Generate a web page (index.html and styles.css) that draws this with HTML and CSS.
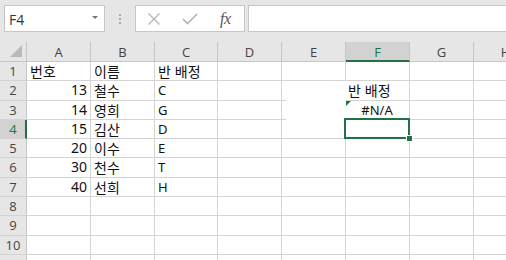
FILE: index.html
```html
<!DOCTYPE html>
<html lang="ko">
<head>
<meta charset="utf-8">
<link rel="stylesheet" href="styles.css">
</head>
<body>
<div class="app">
  <div class="toolbar">
    <div class="namebox"><span class="nb-text">F4</span><span class="nb-arrow"></span></div>
    <div class="grip"><i></i><i></i><i></i></div>
    <div class="fbtns">
      <svg class="ico" width="14" height="14" viewBox="0 0 14 14"><path d="M1.5 1.5 L12.5 12.5 M12.5 1.5 L1.5 12.5" stroke="#b4b4b4" stroke-width="1.3" fill="none"/></svg>
      <svg class="ico" width="16" height="12" viewBox="0 0 16 12"><path d="M1 6 L5.5 10.5 L15 1" stroke="#b4b4b4" stroke-width="1.6" fill="none"/></svg>
      <span class="fx">fx</span>
    </div>
    <div class="finput"></div>
  </div>
  <div class="sheet">
    <div class="corner"><svg width="13" height="13" viewBox="0 0 13 13"><polygon points="12,0 12,12 0,12" fill="#b9b9b9"/></svg></div>
    <div class="ch">A</div><div class="ch">B</div><div class="ch">C</div><div class="ch">D</div><div class="ch">E</div><div class="ch ch-sel">F</div><div class="ch">G</div><div class="ch">H</div>

    <div class="rh">1</div><div class="c">번호</div><div class="c">이름</div><div class="c">반 배정</div><div class="c"></div><div class="c"></div><div class="c"></div><div class="c"></div><div class="c"></div>
    <div class="rh">2</div><div class="c num">13</div><div class="c">철수</div><div class="c lat">C</div><div class="c"></div><div class="c e-blank stub"></div><div class="c e-left">반 배정</div><div class="c"></div><div class="c"></div>
    <div class="rh">3</div><div class="c num">14</div><div class="c">영희</div><div class="c lat">G</div><div class="c"></div><div class="c e-blank stub"></div><div class="c e-left err">#N/A</div><div class="c"></div><div class="c"></div>
    <div class="rh rh-sel">4</div><div class="c num">15</div><div class="c">김산</div><div class="c lat">D</div><div class="c"></div><div class="c e-last"></div><div class="c sel"></div><div class="c"></div><div class="c"></div>
    <div class="rh">5</div><div class="c num">20</div><div class="c">이수</div><div class="c lat">E</div><div class="c"></div><div class="c"></div><div class="c"></div><div class="c"></div><div class="c"></div>
    <div class="rh">6</div><div class="c num">30</div><div class="c">천수</div><div class="c lat">T</div><div class="c"></div><div class="c"></div><div class="c"></div><div class="c"></div><div class="c"></div>
    <div class="rh">7</div><div class="c num">40</div><div class="c">선희</div><div class="c lat">H</div><div class="c"></div><div class="c"></div><div class="c"></div><div class="c"></div><div class="c"></div>
    <div class="rh">8</div><div class="c"></div><div class="c"></div><div class="c"></div><div class="c"></div><div class="c"></div><div class="c"></div><div class="c"></div><div class="c"></div>
    <div class="rh">9</div><div class="c"></div><div class="c"></div><div class="c"></div><div class="c"></div><div class="c"></div><div class="c"></div><div class="c"></div><div class="c"></div>
    <div class="rh">10</div><div class="c"></div><div class="c"></div><div class="c"></div><div class="c"></div><div class="c"></div><div class="c"></div><div class="c"></div><div class="c"></div>
    <div class="rh">11</div><div class="c"></div><div class="c"></div><div class="c"></div><div class="c"></div><div class="c"></div><div class="c"></div><div class="c"></div><div class="c"></div>
  </div>
</div>
</body>
</html>
```
FILE: styles.css
```css
html, body {
  margin: 0;
  padding: 0;
  background: #fff;
  overflow: hidden;
}
.app {
  width: 506px;
  height: 260px;
  overflow: hidden;
  font-family: "Noto Sans CJK KR", "Noto Sans", sans-serif;
}
.toolbar {
  height: 42px;
  background: #e6e6e6;
  display: flex;
  align-items: flex-start;
  padding-top: 5px;
  box-sizing: border-box;
}
.namebox {
  margin-left: 4px;
  width: 101px;
  height: 27px;
  box-sizing: border-box;
  background: #fff;
  border: 1px solid #c6c6c6;
  display: flex;
  align-items: center;
  justify-content: space-between;
  padding: 0 6px 0 4px;
}
.nb-text {
  font-size: 14px;
  color: #333;
  font-family: "Open Sans", "Noto Sans", sans-serif;
  padding-top: 1px;
}
.nb-arrow {
  width: 0;
  height: 0;
  border-left: 3px solid transparent;
  border-right: 3px solid transparent;
  border-top: 3px solid #777;
  margin-bottom: 2px;
}
.grip {
  width: 30px;
  height: 27px;
  display: flex;
  flex-direction: column;
  align-items: center;
  justify-content: center;
  gap: 2px;
}
.grip i {
  display: block;
  width: 2px;
  height: 2px;
  background: #a8a8a8;
}
.fbtns {
  width: 110px;
  height: 27px;
  box-sizing: border-box;
  background: #fff;
  border: 1px solid #c6c6c6;
  display: flex;
  align-items: center;
  padding-left: 11px;
  gap: 21px;
}
.fx {
  font-family: "Liberation Serif", serif;
  font-style: italic;
  font-size: 16px;
  color: #555;
  margin-left: 1px;
  letter-spacing: -0.5px;
}
.finput {
  margin-left: 3px;
  flex: 1;
  height: 27px;
  box-sizing: border-box;
  background: #fff;
  border: 1px solid #c6c6c6;
  border-right: none;
}
.sheet {
  width: 538px;
  display: grid;
  grid-template-columns: 27px 64px 64px 63px 64px 64px 64px 64px 64px;
  grid-template-rows: 20px 19px 20px 19px 19px 19px 20px 19px 19px 20px 19px 20px;
  background: #fff;
}
.corner {
  background: #e6e6e6;
  border-right: 1px solid #c6c6c6;
  border-bottom: 1px solid #c6c6c6;
  box-sizing: border-box;
  display: flex;
  align-items: flex-end;
  justify-content: flex-end;
  padding: 0 3px 3px 0;
}
.corner svg { display: block; }
.ch {
  background: #e6e6e6;
  border-right: 1px solid #c6c6c6;
  border-bottom: 1px solid #c6c6c6;
  box-sizing: border-box;
  font-family: "Open Sans", "Noto Sans", sans-serif;
  font-size: 13px;
  color: #444;
  text-align: center;
  line-height: 20px;
}
.ch-sel {
  background: #d2d2d2;
  color: #217346;
  border-bottom: 2px solid #217346;
}
.rh {
  background: #e6e6e6;
  border-right: 1px solid #c6c6c6;
  border-bottom: 1px solid #d4d4d4;
  box-sizing: border-box;
  font-family: "Open Sans", "Noto Sans", sans-serif;
  font-size: 13px;
  color: #444;
  text-align: center;
  line-height: 19px;
}
.rh-sel {
  background: #d2d2d2;
  color: #217346;
  border-right: 2px solid #217346;
  padding-left: 1px;
}
.c {
  border-right: 1px solid #d4d4d4;
  border-bottom: 1px solid #d4d4d4;
  box-sizing: border-box;
  font-size: 14px;
  color: #111;
  padding: 0 3px;
  line-height: 18px;
  white-space: nowrap;
  position: relative;
}
.lat {
  font-family: "Noto Sans", sans-serif;
  font-size: 13px;
  padding-left: 3px;
}
.num {
  text-align: right;
  font-family: "Noto Sans", sans-serif;
  font-size: 14px;
  padding-right: 3px;
}
.e-blank {
  border-bottom-color: transparent;
  border-right-color: transparent;
}
.stub {
  background-image: linear-gradient(#d4d4d4, #d4d4d4);
  background-size: 4px 1px;
  background-position: left bottom;
  background-repeat: no-repeat;
  background-origin: border-box;
  background-clip: border-box;
}
.e-last {
  border-right-color: transparent;
}
.e-left {
  padding-left: 2px;
}
.err {
  text-align: center;
  font-family: "Noto Sans", sans-serif;
  font-size: 13px;
}
.err::before {
  content: "";
  position: absolute;
  left: 0;
  top: 0;
  width: 0;
  height: 0;
  border-top: 5px solid #217346;
  border-right: 5px solid transparent;
}
.sel::after {
  content: "";
  position: absolute;
  left: -2px;
  top: -2px;
  right: -1px;
  bottom: -1px;
  border: 2px solid #217346;
}
.sel::before {
  content: "";
  position: absolute;
  right: -4px;
  bottom: -4px;
  width: 5px;
  height: 5px;
  background: #217346;
  border: 1px solid #fff;
  z-index: 2;
}
```
